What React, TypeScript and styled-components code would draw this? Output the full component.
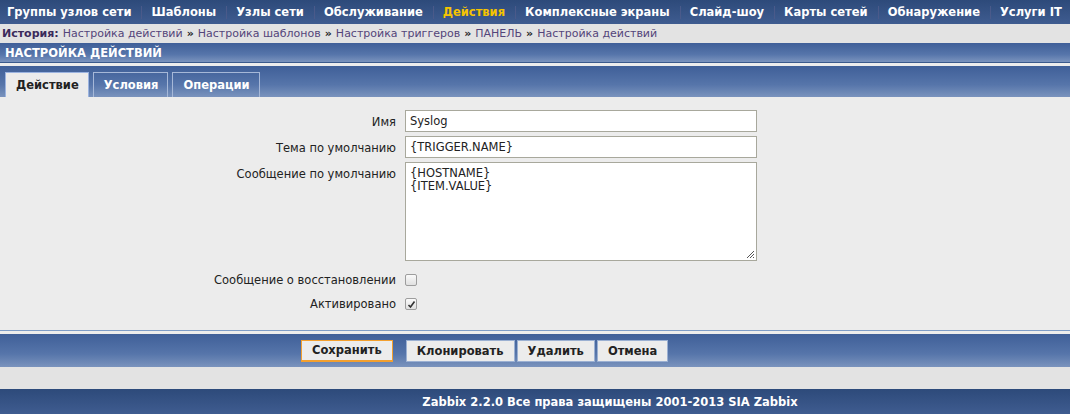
import React from 'react';
import styled, { createGlobalStyle } from 'styled-components';

const GlobalStyle = createGlobalStyle`
  html, body {
    margin: 0;
    padding: 0;
    background: #ececec;
    font-family: "DejaVu Sans", Verdana, sans-serif;
    font-size: 11px;
  }
`;

const blueGradient = 'linear-gradient(to bottom, #3f5f98 0%, #5675aa 60%, #7a93bd 100%)';
const darkGradient = 'linear-gradient(to bottom, #2d4a7a 0%, #3f5c90 100%)';

const Page = styled.div`
  width: 1070px;
  height: 414px;
  overflow: hidden;
  display: flex;
  flex-direction: column;
  & > * {
    flex-shrink: 0;
  }
`;

const TopNav = styled.nav`
  height: 24px;
  background: ${darkGradient};
  display: flex;
  align-items: center;
  padding-left: 2px;
`;

const NavItem = styled.a<{ $active?: boolean }>`
  color: ${({ $active }) => ($active ? '#f5c400' : '#ffffff')};
  font-weight: bold;
  font-size: 11.5px;
  padding: 0 10px 0 5px;
  margin-right: 4px;
  border-right: 1px solid #4a5a8a;
  line-height: 13px;
  white-space: nowrap;
  &:last-child {
    border-right: none;
  }
`;

const History = styled.div`
  height: 19px;
  background: #e3e3e3;
  display: flex;
  align-items: center;
  padding-left: 2px;
  font-size: 11px;
  color: #53457a;
  white-space: nowrap;
`;

const HistoryLabel = styled.b`
  color: #3b2b5b;
  margin-right: 4px;
`;

const Sep = styled.b`
  color: #222;
  margin: 0 4px;
`;

const TitleBar = styled.div`
  height: 19px;
  background: ${blueGradient};
  border-bottom: 1px solid #3a5a8c;
  color: #fff;
  font-weight: bold;
  font-size: 11.5px;
  display: flex;
  align-items: center;
  padding-left: 5px;
`;

const TabBar = styled.div`
  margin-top: 3px;
  height: 31px;
  background: ${blueGradient};
  display: flex;
  align-items: flex-end;
  padding-left: 5px;
  gap: 4px;
`;

const Tab = styled.div<{ $active?: boolean }>`
  height: 25px;
  box-sizing: border-box;
  padding: 0 9px 0 10px;
  display: flex;
  align-items: center;
  font-weight: bold;
  font-size: 11.5px;
  border: 1px solid ${({ $active }) => ($active ? '#9bb3e0' : '#a6b8d8')};
  border-bottom: none;
  background: ${({ $active }) => ($active ? '#ececec' : 'transparent')};
  color: ${({ $active }) => ($active ? '#222' : '#fff')};
`;

const Form = styled.div`
  background: #ececec;
  padding: 13px 0 16px;
  display: grid;
  grid-template-columns: 396px 352px;
  column-gap: 9px;
  row-gap: 4px;
  border-bottom: 1px solid #7e9cc6;
`;

const Label = styled.div<{ $h: number; $top?: number }>`
  text-align: right;
  color: #222;
  font-size: 11.5px;
  height: ${({ $h }) => $h}px;
  padding-top: ${({ $top }) => $top ?? 5}px;
  box-sizing: border-box;
  white-space: nowrap;
`;

const Input = styled.div`
  height: 22px;
  box-sizing: border-box;
  background: #fff;
  border: 1px solid #a8a89c;
  padding: 3px 4px;
  font-size: 11.5px;
  color: #222;
`;

const TextArea = styled(Input)`
  height: 99px;
  position: relative;
  line-height: 13px;
  padding-top: 4px;
`;

const Grip = styled.svg`
  position: absolute;
  right: 1px;
  bottom: 1px;
`;

const CheckCell = styled.div`
  height: 20px;
  display: flex;
  align-items: center;
`;

const Check = styled.span`
  width: 10px;
  height: 10px;
  border: 1px solid #9d9d9d;
  border-radius: 2px;
  background: linear-gradient(#fafafa, #e0e0e0);
  display: flex;
  align-items: center;
  justify-content: center;
`;

const Spacer = styled.div`
  height: 1px;
  grid-column: 1 / 3;
`;

const ButtonBar = styled.div`
  margin-top: 3px;
  height: 33px;
  background: ${blueGradient};
  display: flex;
  align-items: center;
  padding-left: 301px;
`;

const Button = styled.button<{ $primary?: boolean; $gapLeft?: number }>`
  height: 22px;
  margin-left: ${({ $gapLeft }) => $gapLeft ?? 2}px;
  padding: 0 10px;
  font-family: inherit;
  font-weight: bold;
  font-size: 11.5px;
  color: #222;
  background: #ececec;
  border: 1px solid ${({ $primary }) => ($primary ? '#f3a02f' : '#9bb0d2')};
  ${({ $primary }) => ($primary ? 'border-bottom: 2px solid #f3a02f;' : '')}
  border-radius: 0;
`;

const GrayGap = styled.div`
  height: 22px;
  background: #e3e3e3;
`;

const Footer = styled.div`
  height: 25px;
  background: ${darkGradient};
  color: #fff;
  font-weight: bold;
  font-size: 11.5px;
  display: flex;
  align-items: center;
  justify-content: center;
  padding-left: 150px;
`;

const nav = [
  'Группы узлов сети',
  'Шаблоны',
  'Узлы сети',
  'Обслуживание',
  'Действия',
  'Комплексные экраны',
  'Слайд-шоу',
  'Карты сетей',
  'Обнаружение',
  'Услуги IT',
];

const history = [
  'Настройка действий',
  'Настройка шаблонов',
  'Настройка триггеров',
  'ПАНЕЛЬ',
  'Настройка действий',
];

export default function App() {
  return (
    <Page>
      <GlobalStyle />
      <TopNav>
        {nav.map((n) => (
          <NavItem key={n} $active={n === 'Действия'}>
            {n}
          </NavItem>
        ))}
      </TopNav>
      <History>
        <HistoryLabel>История:</HistoryLabel>
        {history.map((h, i) => (
          <React.Fragment key={i}>
            {i > 0 && <Sep>»</Sep>}
            <span>{h}</span>
          </React.Fragment>
        ))}
      </History>
      <TitleBar>НАСТРОЙКА ДЕЙСТВИЙ</TitleBar>
      <TabBar>
        <Tab $active>Действие</Tab>
        <Tab>Условия</Tab>
        <Tab>Операции</Tab>
      </TabBar>
      <Form>
        <Label $h={22}>Имя</Label>
        <Input>Syslog</Input>
        <Label $h={22}>Тема по умолчанию</Label>
        <Input>{'{TRIGGER.NAME}'}</Input>
        <Label $h={99}>Сообщение по умолчанию</Label>
        <TextArea>
          {'{HOSTNAME}'}
          <br />
          {'{ITEM.VALUE}'}
          <Grip width="9" height="9" viewBox="0 0 9 9">
            <path d="M8 1 L1 8 M8 4 L4 8 M8 7 L7 8" stroke="#555" strokeWidth="1" />
          </Grip>
        </TextArea>
        <Spacer />
        <Label $h={20} $top={3}>Сообщение о восстановлении</Label>
        <CheckCell>
          <Check />
        </CheckCell>
        <Label $h={20} $top={3}>Активировано</Label>
        <CheckCell>
          <Check>
            <svg width="9" height="9" viewBox="0 0 9 9">
              <path d="M1.5 5 L3.5 7 L7.5 1.5" stroke="#333" strokeWidth="1.6" fill="none" />
            </svg>
          </Check>
        </CheckCell>
      </Form>
      <ButtonBar>
        <Button $primary $gapLeft={0}>Сохранить</Button>
        <Button $gapLeft={13}>Клонировать</Button>
        <Button>Удалить</Button>
        <Button>Отмена</Button>
      </ButtonBar>
      <GrayGap />
      <Footer>Zabbix 2.2.0 Все права защищены 2001-2013 SIA Zabbix</Footer>
    </Page>
  );
}
